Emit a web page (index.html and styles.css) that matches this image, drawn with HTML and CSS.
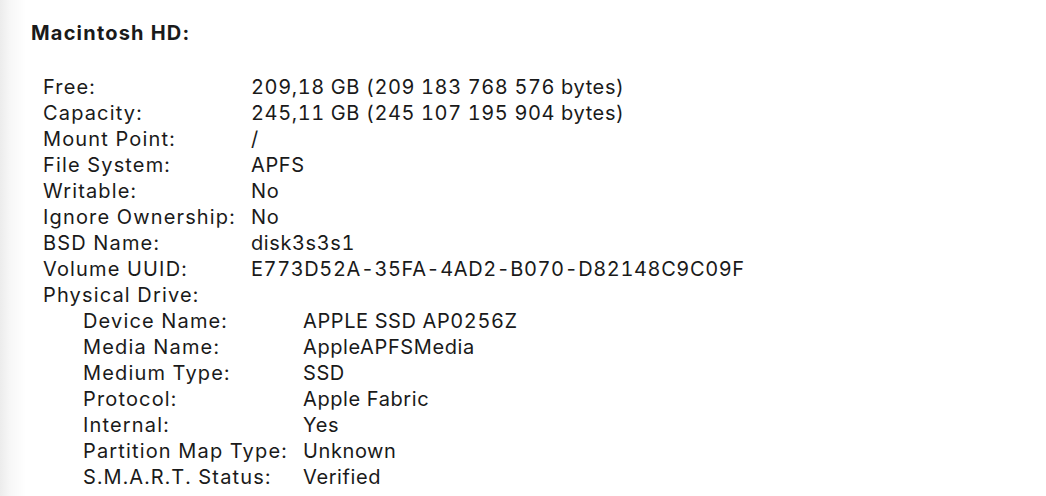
FILE: index.html
```html
<!DOCTYPE html>
<html>
<head>
<meta charset="utf-8">
<link rel="stylesheet" href="styles.css">
</head>
<body>
<div class="page">
  <h1 class="title">Macintosh HD:</h1>
  <div class="props">
    <div class="label">Free:</div><div class="value">209,18 GB (209 183 768 576 bytes)</div>
    <div class="label">Capacity:</div><div class="value">245,11 GB (245 107 195 904 bytes)</div>
    <div class="label">Mount Point:</div><div class="value">/</div>
    <div class="label">File System:</div><div class="value">APFS</div>
    <div class="label">Writable:</div><div class="value">No</div>
    <div class="label">Ignore Ownership:</div><div class="value">No</div>
    <div class="label">BSD Name:</div><div class="value">disk3s3s1</div>
    <div class="label">Volume UUID:</div><div class="value">E773D52A-35FA-4AD2-B070-D82148C9C09F</div>
    <div class="label full">Physical Drive:</div>
  </div>
  <div class="props sub">
    <div class="label">Device Name:</div><div class="value">APPLE SSD AP0256Z</div>
    <div class="label">Media Name:</div><div class="value">AppleAPFSMedia</div>
    <div class="label">Medium Type:</div><div class="value">SSD</div>
    <div class="label">Protocol:</div><div class="value">Apple Fabric</div>
    <div class="label">Internal:</div><div class="value">Yes</div>
    <div class="label">Partition Map Type:</div><div class="value">Unknown</div>
    <div class="label">S.M.A.R.T. Status:</div><div class="value">Verified</div>
  </div>
</div>
</body>
</html>
```

FILE: styles.css
```css
html, body {
  margin: 0;
  padding: 0;
  height: 100%;
}
body {
  background: linear-gradient(to right, #ececec 0px, #f7f7f7 10px, #ffffff 26px);
  font-family: Inter, "Noto Sans", "Liberation Sans", sans-serif;
  color: #1a1a1a;
  overflow: hidden;
}
.page {
  padding: 14px 0 0 31px;
}
.title {
  margin: 0;
  font-size: 20px;
  font-weight: 700;
  line-height: 38px;
  letter-spacing: 1.2px;
}
.props {
  display: grid;
  grid-template-columns: 208px auto;
  justify-content: start;
  margin: 22px 0 0 12px;
  font-size: 20px;
  line-height: 26px;
  font-variant-numeric: tabular-nums;
}
.props .full {
  grid-column: 1 / 3;
}
.props.sub {
  margin: 0 0 0 52px;
  grid-template-columns: 220px auto;
}
.label, .value {
  white-space: nowrap;
}
.label {
  letter-spacing: 1.15px;
}
.value {
  letter-spacing: 0.6px;
}
```
